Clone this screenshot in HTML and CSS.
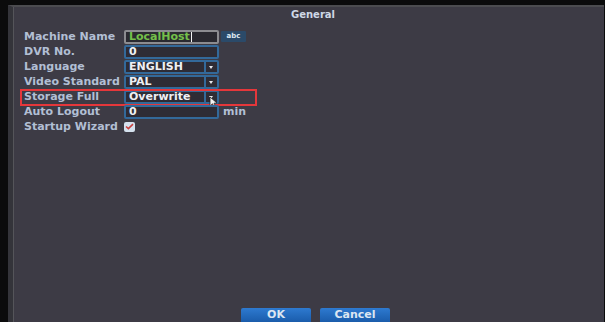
FILE: index.html
```html
<!DOCTYPE html>
<html lang="en">
<head>
  <meta charset="UTF-8">
  <title>General</title>
  <link rel="stylesheet" href="styles.css">
</head>
<body>
  <div class="screen">
    <div class="panel">
      <div class="title">General</div>

      <div class="form">
        <div class="row">
          <span class="label">Machine Name</span>
          <div class="field focused"><span class="green">LocalHost</span><i class="caret"></i></div>
          <span class="abc">abc</span>
        </div>
        <div class="row">
          <span class="label">DVR No.</span>
          <div class="field">0</div>
        </div>
        <div class="row">
          <span class="label">Language</span>
          <div class="field select">ENGLISH<span class="arrow"></span></div>
        </div>
        <div class="row">
          <span class="label">Video Standard</span>
          <div class="field select">PAL<span class="arrow"></span></div>
        </div>
        <div class="row marked">
          <span class="label">Storage Full</span>
          <div class="field select">Overwrite<span class="arrow"></span></div>
          <!-- recuadro rojo de la captura -->
          <div class="redbox"></div>
          <svg class="pointer" width="9" height="12" viewBox="0 0 9 12">
            <path d="M1 1 L1 10 L3.5 7.8 L5.3 11.2 L6.8 10.5 L5 7.2 L8 7 Z" fill="#f2f2f2" stroke="#222" stroke-width="0.8"/>
          </svg>
        </div>
        <div class="row">
          <span class="label">Auto Logout</span>
          <div class="field">0</div>
          <span class="unit">min</span>
        </div>
        <div class="row">
          <span class="label">Startup Wizard</span>
          <span class="check">
            <svg width="9" height="7" viewBox="0 0 9 7"><path d="M1 3.5 L3.4 5.6 L8 1.2" fill="none" stroke="#c8413f" stroke-width="1.6"/></svg>
          </span>
        </div>
      </div>

      <div class="footer">
        <button class="btn">OK</button>
        <button class="btn">Cancel</button>
      </div>
    </div>
  </div>
</body>
</html>
```

FILE: styles.css
```css
body {
  margin: 0;
  padding: 0;
  background: #0b0b0c;
  font-family: 'DejaVu Sans', Verdana, sans-serif;
  overflow: hidden;
}

.screen {
  height: 322px;
  padding: 5px 1px 0 8px;
  box-sizing: border-box;
}

.panel {
  height: 100%;
  box-sizing: border-box;
  display: flex;
  flex-direction: column;
  background: #3d3b45;
  border-top: 2px solid #4c4c50;
  border-left: 5px solid #34343a;
  box-shadow: inset 1px 0 0 #55555a;
  overflow: hidden;
}

.title {
  height: 15px;
  line-height: 15px;
  padding-left: 9px;
  text-align: center;
  font-size: 10px;
  font-weight: bold;
  color: #cfd8e6;
}

/* Formulario */
.form {
  padding: 7px 0 0 11px;
}

.row {
  position: relative;
  display: flex;
  align-items: center;
  height: 15px;
}

.label {
  width: 100px;
  font-size: 11px;
  font-weight: bold;
  color: #b2bfd4;
  white-space: nowrap;
}

.field {
  position: relative;
  width: 95px;
  height: 14px;
  box-sizing: border-box;
  border: 2px solid #33699a;
  border-radius: 2px;
  background: #2e2c35;
  padding-left: 3px;
  font-size: 11px;
  font-weight: bold;
  line-height: 10px;
  color: #eef0f4;
}

.field.focused {
  border-color: #8c8c90;
  background: #2a2930;
}

.green {
  color: #74c04a;
}

.caret {
  display: inline-block;
  width: 1px;
  height: 10px;
  margin-left: 1px;
  vertical-align: top;
  background: #f4f4f4;
}

.abc {
  margin-left: 2px;
  width: 25px;
  height: 11px;
  line-height: 11px;
  background: #2b4a69;
  border-radius: 1px;
  text-align: center;
  font-size: 7px;
  font-weight: bold;
  color: #dfe8f2;
}

.select .arrow {
  position: absolute;
  top: 0;
  right: 0;
  width: 11px;
  height: 10px;
  border-left: 2px solid #33699a;
}

.select .arrow::after {
  content: "";
  position: absolute;
  left: 3px;
  top: 4px;
  border-left: 2.5px solid transparent;
  border-right: 2.5px solid transparent;
  border-top: 3px solid #e8eaee;
}

.unit {
  margin-left: 4px;
  font-size: 11px;
  font-weight: bold;
  color: #b2bfd4;
}

.check {
  display: flex;
  align-items: center;
  justify-content: center;
  width: 11px;
  height: 10px;
  border-radius: 2px;
  background: #d5e1ee;
}

/* Marca roja y puntero, encima del formulario */
.redbox {
  position: absolute;
  left: -4px;
  top: 0;
  width: 237px;
  height: 17px;
  box-sizing: border-box;
  border: 2px solid #e5373b;
}

.pointer {
  position: absolute;
  left: 185px;
  top: 7px;
}

/* Botones */
.footer {
  margin-top: auto;
  display: flex;
  justify-content: center;
  gap: 9px;
  padding-left: 14px;
}

.btn {
  width: 70px;
  height: 14px;
  padding: 0;
  border: none;
  border-radius: 2px 2px 0 0;
  background: linear-gradient(to bottom, #2e7ad0, #1a5cab);
  font-family: 'DejaVu Sans', Verdana, sans-serif;
  font-size: 11px;
  font-weight: bold;
  line-height: 14px;
  color: #dce6f2;
}
```
